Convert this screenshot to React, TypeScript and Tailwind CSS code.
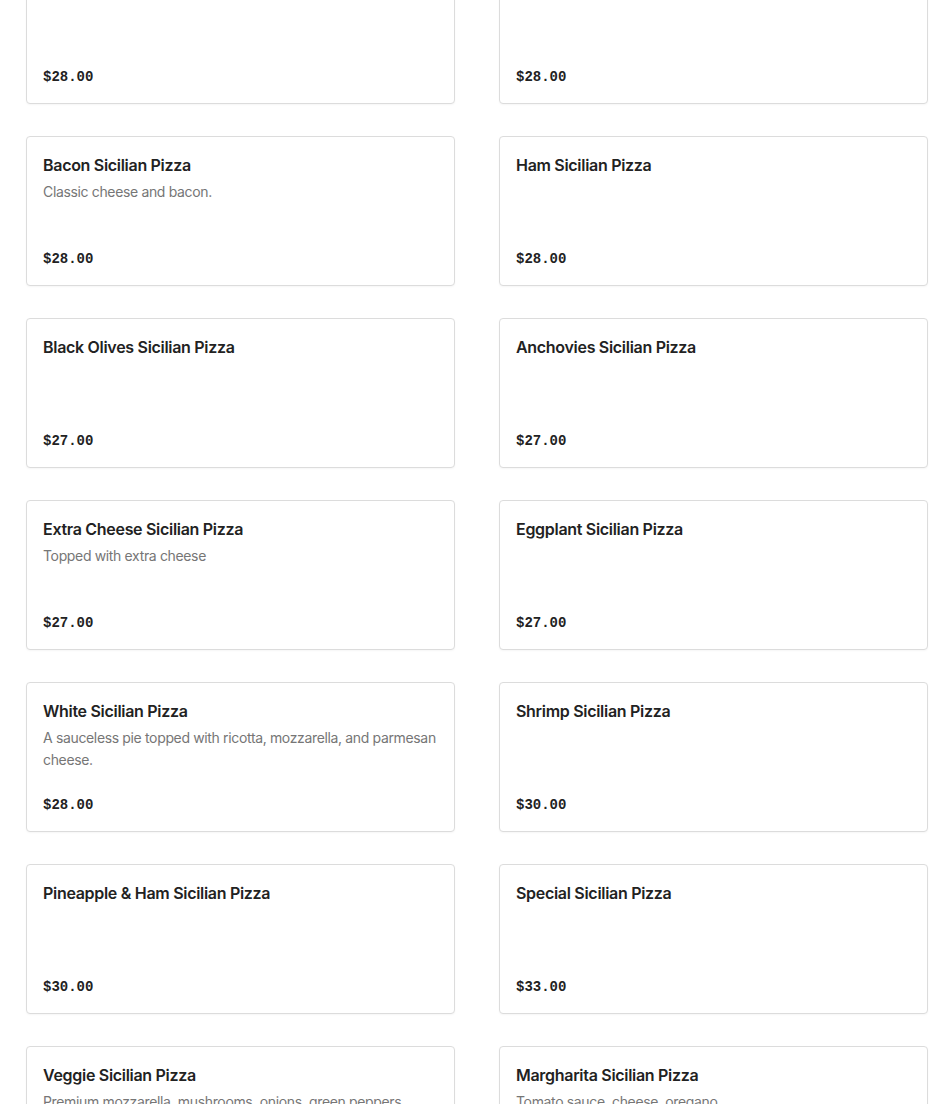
const items = [
  { name: "Cheese Sicilian Pizza", desc: "", price: "$28.00" },
  { name: "Pepperoni Sicilian Pizza", desc: "", price: "$28.00" },
  { name: "Bacon Sicilian Pizza", desc: "Classic cheese and bacon.", price: "$28.00" },
  { name: "Ham Sicilian Pizza", desc: "", price: "$28.00" },
  { name: "Black Olives Sicilian Pizza", desc: "", price: "$27.00" },
  { name: "Anchovies Sicilian Pizza", desc: "", price: "$27.00" },
  { name: "Extra Cheese Sicilian Pizza", desc: "Topped with extra cheese", price: "$27.00" },
  { name: "Eggplant Sicilian Pizza", desc: "", price: "$27.00" },
  {
    name: "White Sicilian Pizza",
    desc: "A sauceless pie topped with ricotta, mozzarella, and parmesan cheese.",
    price: "$28.00",
  },
  { name: "Shrimp Sicilian Pizza", desc: "", price: "$30.00" },
  { name: "Pineapple & Ham Sicilian Pizza", desc: "", price: "$30.00" },
  { name: "Special Sicilian Pizza", desc: "", price: "$33.00" },
  {
    name: "Veggie Sicilian Pizza",
    desc: "Premium mozzarella, mushrooms, onions, green peppers, broccoli and black olives.",
    price: "$30.00",
  },
  { name: "Margharita Sicilian Pizza", desc: "Tomato sauce, cheese, oregano", price: "$30.00" },
];

function App() {
  return (
    <div className="h-[1104px] overflow-hidden bg-white font-['Inter',sans-serif]">
      {/* menu grid, scrolled slightly so the first row is cut off */}
      <div className="-mt-[46px] pl-[26px] pr-[22px] grid grid-cols-2 gap-x-[44px] gap-y-[32px]">
        {items.map((item) => (
          <div
            key={item.name}
            className="h-[150px] flex flex-col rounded-[4px] border border-[#dcdcdc] bg-white px-4 pt-4 pb-4 shadow-[0_1px_2px_rgba(0,0,0,0.04)]"
          >
            <div className="text-[16px] leading-6 font-semibold tracking-[-0.3px] text-[#222222]">
              {item.name}
            </div>
            {item.desc && (
              <div className="mt-1 text-[14px] leading-[22px] tracking-[-0.35px] text-[#767676]">
                {item.desc}
              </div>
            )}
            <div className="mt-auto font-['Liberation_Mono',monospace] text-[14px] leading-5 font-bold text-[#222222]">
              {item.price}
            </div>
          </div>
        ))}
      </div>
    </div>
  );
}

export default App;
